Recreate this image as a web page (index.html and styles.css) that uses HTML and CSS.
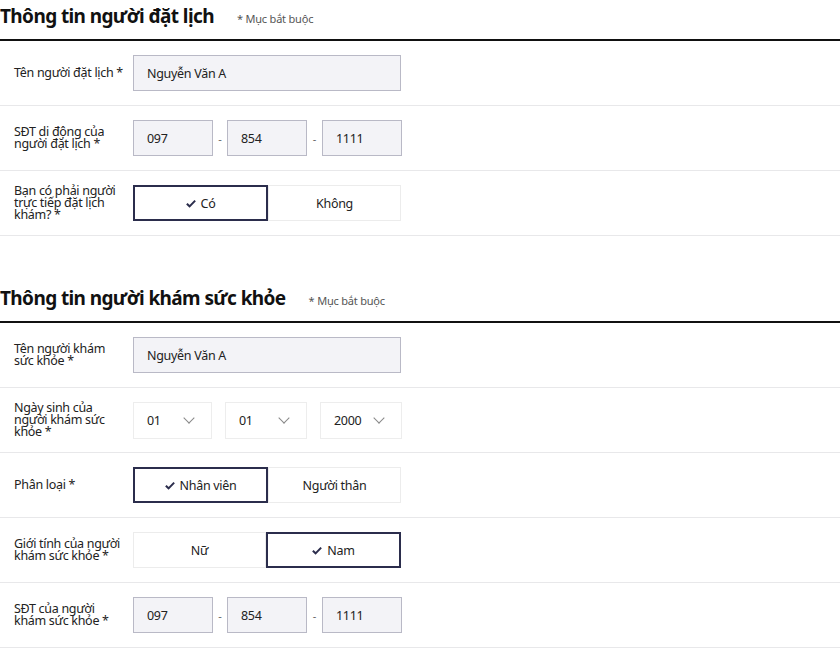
FILE: index.html
```html
<!DOCTYPE html>
<html lang="vi">
<head>
    <meta charset="UTF-8">
    <meta name="viewport" content="width=device-width, initial-scale=1.0">
    <title>Đặt lịch khám</title>
    <link rel="stylesheet" href="styles.css">
</head>
<body>

    <div class="booking">
        <!-- Người đặt lịch -->
        <section class="section">
            <div class="section-head">
                <h2>Thông tin người đặt lịch</h2>
                <span class="required-note">* Mục bắt buộc</span>
            </div>

            <div class="row">
                <label class="row-label">Tên người đặt lịch *</label>
                <div class="field">
                    <input type="text" class="text-input wide" value="Nguyễn Văn A">
                </div>
            </div>

            <div class="row">
                <label class="row-label">SĐT di động của người đặt lịch *</label>
                <div class="field phone">
                    <input type="text" class="text-input short" value="097">
                    <span class="dash">-</span>
                    <input type="text" class="text-input short" value="854">
                    <span class="dash last">-</span>
                    <input type="text" class="text-input short" value="1111">
                </div>
            </div>

            <div class="row">
                <label class="row-label">Bạn có phải người trực tiếp đặt lịch khám? *</label>
                <div class="field">
                    <div class="toggle">
                        <button class="toggle-btn active"><svg class="check" viewBox="0 0 12 10"><path d="M1 5.2 L4.3 8.4 L11 1.6" /></svg>Có</button>
                        <button class="toggle-btn">Không</button>
                    </div>
                </div>
            </div>
        </section>

        <!-- Người khám -->
        <section class="section second">
            <div class="section-head">
                <h2>Thông tin người khám sức khỏe</h2>
                <span class="required-note">* Mục bắt buộc</span>
            </div>

            <div class="row">
                <label class="row-label">Tên người khám sức khỏe *</label>
                <div class="field">
                    <input type="text" class="text-input wide" value="Nguyễn Văn A">
                </div>
            </div>

            <div class="row">
                <label class="row-label">Ngày sinh của người khám sức khỏe *</label>
                <div class="field dates">
                    <div class="select-box day">01<span class="chevron"></span></div>
                    <div class="select-box">01<span class="chevron"></span></div>
                    <div class="select-box">2000<span class="chevron"></span></div>
                </div>
            </div>

            <div class="row">
                <label class="row-label">Phân loại *</label>
                <div class="field">
                    <div class="toggle">
                        <button class="toggle-btn active"><svg class="check" viewBox="0 0 12 10"><path d="M1 5.2 L4.3 8.4 L11 1.6" /></svg>Nhân viên</button>
                        <button class="toggle-btn">Người thân</button>
                    </div>
                </div>
            </div>

            <div class="row">
                <label class="row-label">Giới tính của người khám sức khỏe *</label>
                <div class="field">
                    <div class="toggle">
                        <button class="toggle-btn">Nữ</button>
                        <button class="toggle-btn active"><svg class="check" viewBox="0 0 12 10"><path d="M1 5.2 L4.3 8.4 L11 1.6" /></svg>Nam</button>
                    </div>
                </div>
            </div>

            <div class="row">
                <label class="row-label">SĐT của người khám sức khỏe *</label>
                <div class="field phone">
                    <input type="text" class="text-input short" value="097">
                    <span class="dash">-</span>
                    <input type="text" class="text-input short" value="854">
                    <span class="dash last">-</span>
                    <input type="text" class="text-input short" value="1111">
                </div>
            </div>
        </section>
    </div>

</body>
</html>
```

FILE: styles.css
```css
body {
    margin: 0;
    font-family: "Noto Sans", Arial, sans-serif;
    color: #222;
    background: #fff;
}

.booking {
    width: 840px;
}

.section-head {
    display: flex;
    align-items: baseline;
    gap: 23px;
    height: 39px;
    border-bottom: 2px solid #111;
}

.section-head h2 {
    margin: 0;
    font-size: 19px;
    font-weight: bold;
    letter-spacing: -0.6px;
    line-height: 33px;
    color: #111;
}

.required-note {
    font-size: 11px;
    color: #555;
    letter-spacing: -0.2px;
}

.second {
    margin-top: 46px;
}

.row {
    display: flex;
    align-items: center;
    height: 64px;
    border-bottom: 1px solid #e8e8ea;
}

.row-label {
    width: 111px;
    padding-left: 14px;
    padding-right: 8px;
    font-size: 12.5px;
    line-height: 12px;
    letter-spacing: -0.3px;
    color: #222;
}

.field {
    display: flex;
    align-items: center;
}

.text-input {
    box-sizing: border-box;
    height: 36px;
    padding: 0 13px;
    border: 1px solid #b9b9c6;
    background: #f3f3f7;
    font-family: "Noto Sans", Arial, sans-serif;
    font-size: 12.5px;
    letter-spacing: -0.3px;
    color: #222;
    outline: none;
}

.text-input.wide {
    width: 268px;
}

.text-input.short {
    width: 80px;
}

.dash {
    width: 14px;
    text-align: center;
    font-size: 11px;
    color: #666;
}

.dash.last {
    width: 15px;
}

.dates {
    gap: 13px;
}

.select-box {
    box-sizing: border-box;
    width: 82px;
    height: 37px;
    padding: 0 13px;
    border: 1px solid #ededed;
    display: flex;
    align-items: center;
    justify-content: space-between;
    font-size: 12.5px;
    letter-spacing: -0.3px;
}

.select-box.day {
    width: 79px;
}

.chevron {
    width: 7px;
    height: 7px;
    border-right: 1.3px solid #888;
    border-bottom: 1.3px solid #888;
    transform: rotate(45deg);
    margin-top: -5px;
    margin-right: 5px;
}

.toggle {
    display: flex;
    width: 268px;
}

.toggle-btn {
    box-sizing: border-box;
    flex: 1;
    height: 36px;
    display: flex;
    align-items: center;
    justify-content: center;
    border: 1px solid #ececec;
    background: #fff;
    font-family: "Noto Sans", Arial, sans-serif;
    font-size: 12.5px;
    letter-spacing: -0.3px;
    color: #222;
    cursor: pointer;
}

.toggle-btn.active {
    border: 2px solid #2b2d4c;
}

.check {
    width: 10px;
    height: 9px;
    margin-right: 5px;
    fill: none;
    stroke: #2b2d4c;
    stroke-width: 2.4;
}
```
